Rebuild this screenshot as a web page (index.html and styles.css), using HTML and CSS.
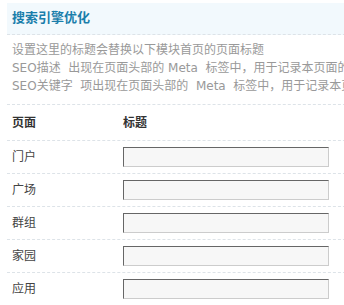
FILE: index.html
```html
<!DOCTYPE html>
<html lang="zh-CN">
<head>
<meta charset="utf-8">
<title>搜索引擎优化</title>
<link rel="stylesheet" href="styles.css">
</head>
<body>
<div class="panel">
  <div class="partition">搜索引擎优化</div>
  <div class="tips">
    <div class="tip">设置这里的标题会替换以下模块首页的页面标题</div>
    <div class="tip">SEO描述  出现在页面头部的 Meta  标签中，用于记录本页面的概要与描述，建议不超过 80 个字</div>
    <div class="tip">SEO关键字  项出现在页面头部的  Meta  标签中，用于记录本页面的关键字，多个关键字间请用半角逗号 "," 隔开</div>
  </div>
  <div class="row head">
    <div class="c1">页面</div>
    <div class="c2">标题</div>
  </div>
  <div class="row">
    <div class="c1">门户</div>
    <div class="c2"><input class="txt" type="text"></div>
  </div>
  <div class="row">
    <div class="c1">广场</div>
    <div class="c2"><input class="txt" type="text"></div>
  </div>
  <div class="row">
    <div class="c1">群组</div>
    <div class="c2"><input class="txt" type="text"></div>
  </div>
  <div class="row">
    <div class="c1">家园</div>
    <div class="c2"><input class="txt" type="text"></div>
  </div>
  <div class="row">
    <div class="c1">应用</div>
    <div class="c2"><input class="txt" type="text"></div>
  </div>
</div>
</body>
</html>
```
FILE: styles.css
```css
html, body {
  margin: 0;
  padding: 0;
  background: #fff;
  overflow: hidden;
}
body {
  font-family: "DejaVu Sans", "Noto Sans CJK SC", sans-serif;
  font-size: 12px;
  line-height: 18px;
  color: #444;
}
.panel {
  margin: 3px 0 0 7px;
  width: 720px;
}
.partition {
  background: #f2f9fd;
  color: #1a7eab;
  font-weight: 700;
  font-size: 13px;
  height: 31px;
  line-height: 30px;
  padding-left: 5px;
  border-bottom: 1px dashed #dde3e8;
}
.tips {
  padding: 6px 5px 9px;
  color: #999;
  border-bottom: 1px dashed #dde3e8;
}
.tip {
  height: 18px;
  line-height: 18px;
  white-space: pre;
}
.row {
  display: flex;
  align-items: center;
  height: 32px;
  border-bottom: 1px dashed #dde3e8;
}
.row.head {
  height: 35px;
  font-weight: 700;
  color: #333;
}
.c1 {
  width: 111px;
  padding-left: 5px;
}
.c2 {
  flex: 1;
  display: flex;
  align-items: center;
}
.txt {
  box-sizing: border-box;
  width: 206px;
  height: 20px;
  margin: 0;
  padding: 2px;
  border: 1px solid;
  border-color: #666 #ccc #ccc #666;
  background: #f7f7f7;
  font: 12px "Noto Sans CJK SC", sans-serif;
  outline: none;
}
```
